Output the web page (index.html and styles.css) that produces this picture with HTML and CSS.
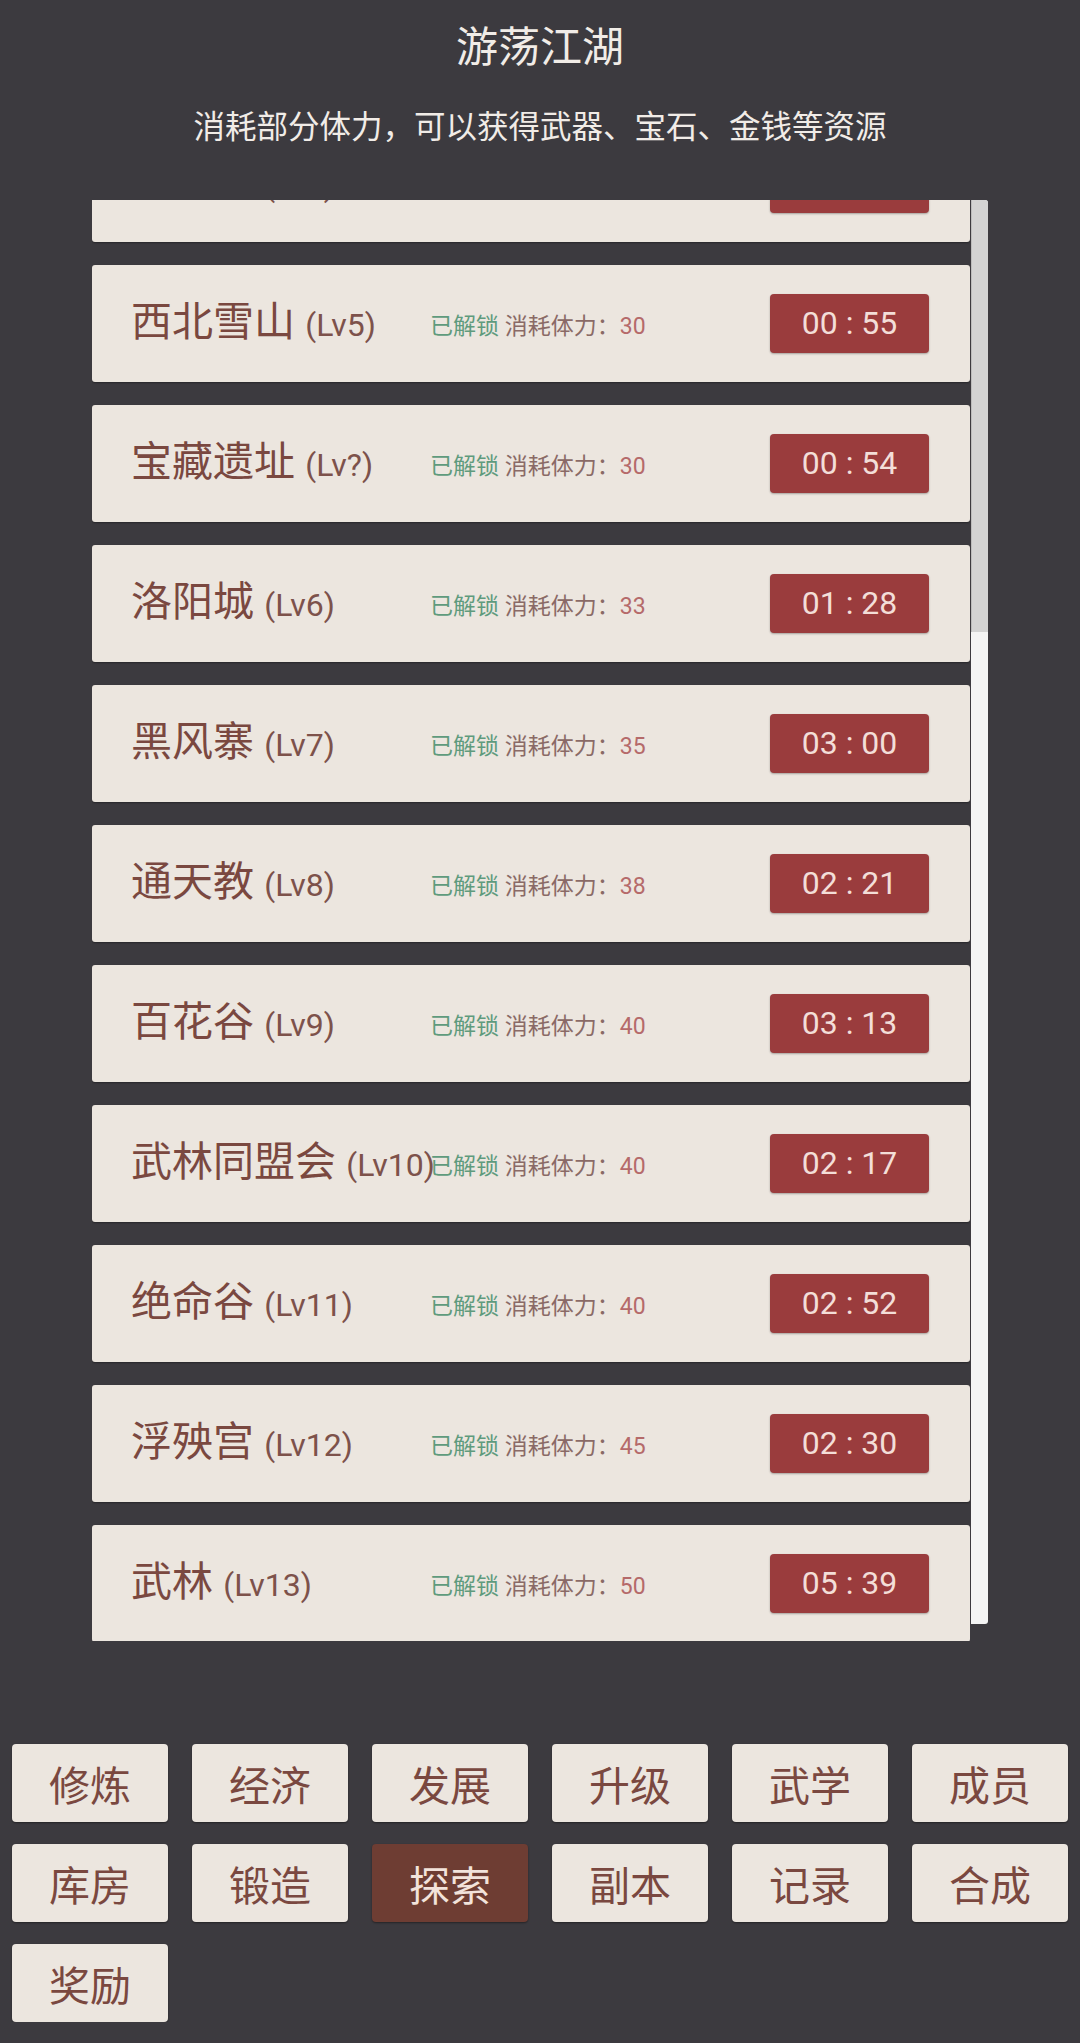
FILE: index.html
```html
<!DOCTYPE html>
<html lang="zh-CN">
<head>
    <meta charset="UTF-8">
    <meta name="viewport" content="width=device-width, initial-scale=1.0">
    <title>游荡江湖</title>
    <link rel="stylesheet" href="styles.css">
</head>
<body>
    <div class="head">
        <h1>游荡江湖</h1>
        <p>消耗部分体力，可以获得武器、宝石、金钱等资源</p>
    </div>
    <div class="stage_box">
        <div class="stage_list" id="stage_list">
            <ul>
                <li class="stage">
                    <div class="stage_name">少林寺 <span class="lv">(Lv4)</span></div>
                    <div class="stage_info"><span class="unlock">已解锁</span> 消耗体力：<span class="cost">25</span></div>
                    <div class="stage_time">00 : 48</div>
                </li>
                <li class="stage">
                    <div class="stage_name">西北雪山 <span class="lv">(Lv5)</span></div>
                    <div class="stage_info"><span class="unlock">已解锁</span> 消耗体力：<span class="cost">30</span></div>
                    <div class="stage_time">00 : 55</div>
                </li>
                <li class="stage">
                    <div class="stage_name">宝藏遗址 <span class="lv">(Lv?)</span></div>
                    <div class="stage_info"><span class="unlock">已解锁</span> 消耗体力：<span class="cost">30</span></div>
                    <div class="stage_time">00 : 54</div>
                </li>
                <li class="stage">
                    <div class="stage_name">洛阳城 <span class="lv">(Lv6)</span></div>
                    <div class="stage_info"><span class="unlock">已解锁</span> 消耗体力：<span class="cost">33</span></div>
                    <div class="stage_time">01 : 28</div>
                </li>
                <li class="stage">
                    <div class="stage_name">黑风寨 <span class="lv">(Lv7)</span></div>
                    <div class="stage_info"><span class="unlock">已解锁</span> 消耗体力：<span class="cost">35</span></div>
                    <div class="stage_time">03 : 00</div>
                </li>
                <li class="stage">
                    <div class="stage_name">通天教 <span class="lv">(Lv8)</span></div>
                    <div class="stage_info"><span class="unlock">已解锁</span> 消耗体力：<span class="cost">38</span></div>
                    <div class="stage_time">02 : 21</div>
                </li>
                <li class="stage">
                    <div class="stage_name">百花谷 <span class="lv">(Lv9)</span></div>
                    <div class="stage_info"><span class="unlock">已解锁</span> 消耗体力：<span class="cost">40</span></div>
                    <div class="stage_time">03 : 13</div>
                </li>
                <li class="stage">
                    <div class="stage_name">武林同盟会 <span class="lv">(Lv10)</span></div>
                    <div class="stage_info"><span class="unlock">已解锁</span> 消耗体力：<span class="cost">40</span></div>
                    <div class="stage_time">02 : 17</div>
                </li>
                <li class="stage">
                    <div class="stage_name">绝命谷 <span class="lv">(Lv11)</span></div>
                    <div class="stage_info"><span class="unlock">已解锁</span> 消耗体力：<span class="cost">40</span></div>
                    <div class="stage_time">02 : 52</div>
                </li>
                <li class="stage">
                    <div class="stage_name">浮殃宫 <span class="lv">(Lv12)</span></div>
                    <div class="stage_info"><span class="unlock">已解锁</span> 消耗体力：<span class="cost">45</span></div>
                    <div class="stage_time">02 : 30</div>
                </li>
                <li class="stage">
                    <div class="stage_name">武林 <span class="lv">(Lv13)</span></div>
                    <div class="stage_info"><span class="unlock">已解锁</span> 消耗体力：<span class="cost">50</span></div>
                    <div class="stage_time">05 : 39</div>
                </li>
            </ul>
        </div>
        <div class="scroll_bar"><div class="scroll_thumb"></div></div>
    </div>
    <div class="menu">
        <button>修炼</button>
        <button>经济</button>
        <button>发展</button>
        <button>升级</button>
        <button>武学</button>
        <button>成员</button>
        <button>库房</button>
        <button>锻造</button>
        <button class="on">探索</button>
        <button>副本</button>
        <button>记录</button>
        <button>合成</button>
        <button>奖励</button>
    </div>
    <script>
        document.getElementById('stage_list').scrollTop = 75;
    </script>
</body>
</html>
```

FILE: styles.css
```css
body { margin: 0; background-color: #3c3a3f; font-family: Roboto, "Noto Sans CJK SC", sans-serif; }
.head { text-align: center; color: #f1ece7; padding-top: 20px; }
.head h1 { margin: 0; font-size: 42px; font-weight: normal; line-height: 56px; }
.head p { margin: 30px 0 0; font-size: 31.5px; line-height: 44px; }

.stage_box { display: flex; align-items: flex-start; width: 896px; margin: 50px auto 0; }
.stage_list { flex: 1; height: 1441px; overflow-y: auto; scrollbar-width: none; }
.stage_list ul { list-style: none; margin: 0; padding: 0; }
.scroll_bar { width: 17px; height: 1424px; margin-left: 1px; background-color: #f4f4f4; border-radius: 0 3px 3px 0; overflow: hidden; }
.scroll_thumb { height: 432px; background-color: #d3d3d3; border-left: 1px solid #bcbcbc; }

.stage { display: flex; align-items: center; height: 117px; margin-bottom: 23px; padding: 0 41px 0 39px; box-sizing: border-box; background-color: #ece6df; border-radius: 3px; box-shadow: 0 1px 2px rgba(0, 0, 0, 0.35); }
.stage_name { width: 299px; flex-shrink: 0; white-space: nowrap; font-size: 41px; line-height: 50px; color: #7a4840; }
.stage_name .lv { font-size: 32px; color: #7d524b; }
.stage_info { font-size: 23px; color: #8a6a66; white-space: nowrap; }
.stage_info .unlock { color: #5f9b7d; }
.stage_info .cost { color: #b56a6a; }
.stage_time { margin-left: auto; width: 159px; height: 59px; line-height: 59px; text-align: center; font-size: 32px; color: #f3ded8; background-color: #9a3c3d; border-radius: 4px; box-shadow: 0 1px 2px rgba(0, 0, 0, 0.3); }

.menu { display: grid; grid-template-columns: repeat(6, 1fr); gap: 22px 24px; padding: 103px 12px 0; }
.menu button { height: 78px; padding: 0; border: none; border-radius: 4px; background-color: #ece6df; color: #7a4840; font-family: Roboto, "Noto Sans CJK SC", sans-serif; font-size: 41px; box-shadow: 0 1px 2px rgba(0, 0, 0, 0.4); }
.menu button.on { background-color: #6e3d33; color: #f2e3db; }
```
